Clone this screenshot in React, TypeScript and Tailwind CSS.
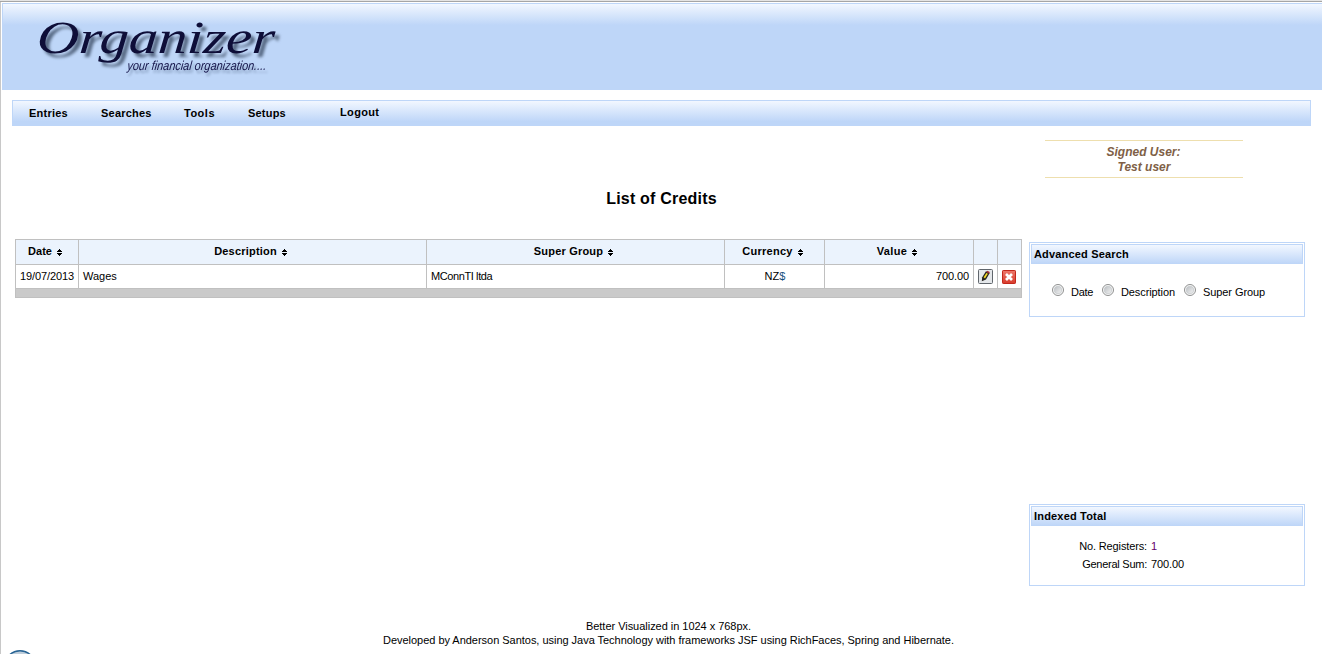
import type { ReactNode } from "react";

function SortIcon() {
  return (
    <svg className="mt-[3px] ml-[5px] shrink-0" width="5" height="7" viewBox="0 0 5 7" shapeRendering="crispEdges">
      <path d="M2 0h1v1h1v1h1v1H0V2h1V1h1zM0 4h5v1H4v1H3v1H2V6H1V5H0z" fill="#000" />
    </svg>
  );
}

function HeadCell({ label, className }: { label: string; className: string }) {
  return (
    <div className={`flex h-[24px] items-center justify-center border-r border-[#c0c0c0] bg-[#ebf3fd] pr-[4px] pb-[2px] font-bold ${className}`}>
      {label && (
        <>
          <span>{label}</span>
          <SortIcon />
        </>
      )}
    </div>
  );
}

function Panel({ title, className, children }: { title: string; className: string; children: ReactNode }) {
  return (
    <section className={`w-[276px] border border-[#bed6f8] p-px ${className}`}>
      <h2 className="h-[20px] border border-[#bed6f8] bg-linear-to-b from-[#f2f7ff] to-[#c0d7f8] pl-[2px] leading-[19px] font-bold tracking-[0.18px]">
        {title}
      </h2>
      {children}
    </section>
  );
}

function Radio() {
  return (
    <svg className="shrink-0" width="12" height="12" viewBox="0 0 12 12">
      <defs>
        <linearGradient id="radio" x1="0" y1="0" x2="1" y2="1">
          <stop offset="0" stopColor="#b9bdc1" />
          <stop offset="1" stopColor="#f4f4f4" />
        </linearGradient>
      </defs>
      <circle cx="6" cy="6" r="5.5" fill="#fafafa" stroke="#8e8f8f" />
      <circle cx="6" cy="6" r="3.8" fill="url(#radio)" stroke="#c2c5c8" strokeWidth="0.7" />
    </svg>
  );
}

function EditIcon() {
  return (
    <svg width="15" height="15" viewBox="0 0 15 15">
      <rect x="0.5" y="0.5" width="14" height="14" rx="1" fill="#e4e7ea" stroke="#60666c" />
      <path d="M3.8 12.3l.4-4L8 2.3l3.6 1.9L8 10.4z" fill="#24231f" />
      <path d="M5.6 8.3l2.8-4.4 1.5.8-2.9 4.7z" fill="#f2d824" />
      <path d="M8.3 2.9l1-1.2 2.5 1.4-.6 1.6z" fill="#a42d35" />
    </svg>
  );
}

function DeleteIcon() {
  return (
    <svg width="14" height="14" viewBox="0 0 14 14">
      <defs>
        <linearGradient id="delete" x1="0" y1="0" x2="0" y2="1">
          <stop offset="0" stopColor="#ed796c" />
          <stop offset="1" stopColor="#d83a2b" />
        </linearGradient>
      </defs>
      <rect x="0.5" y="0.5" width="13" height="13" rx="0.7" fill="url(#delete)" stroke="#c3271b" />
      <path d="M4 4l6 6M10 4l-6 6" stroke="#fff" strokeWidth="2.7" />
    </svg>
  );
}

function Brand() {
  return (
    <svg className="font-['Liberation_Serif',serif] italic" width="300" height="85" viewBox="0 0 300 85">
      <g className="drop-shadow-[4px_4px_1.5px_rgba(50,66,90,0.75)]">
        <text transform="translate(33 49) skewX(-4)" textLength="238" lengthAdjust="spacingAndGlyphs" fontSize="46" fill="#0e0e38">
          Organizer
        </text>
      </g>
      <g className="font-['Liberation_Sans',sans-serif] drop-shadow-[2px_3px_1px_rgba(60,80,110,0.45)]">
        <text transform="translate(124 66) skewX(-6)" textLength="139" lengthAdjust="spacingAndGlyphs" fontSize="13" fill="#15154a">
          your financial organization....
        </text>
      </g>
    </svg>
  );
}

export default function App() {
  return (
    <div className="flex h-[654px] w-[1322px] flex-col overflow-hidden border-t border-[#e4e4e4] bg-white font-['Liberation_Sans',Arial,sans-serif] text-[11px] text-black">
      <div className="h-px shrink-0 bg-[#a5a5a5]" />
      <div className="flex h-[652px] flex-col border-l border-[#c8c8c8] pt-px">
        <header className="ml-px h-[87px] shrink-0 border border-r-0 border-[#bed6f8] bg-[#bed6f8] bg-[linear-gradient(to_bottom,#f2f7ff_0px,#bed6f8_21px)]">
          <Brand />
        </header>

        <nav className="mt-[10px] ml-[11px] flex h-[26px] w-[1299px] shrink-0 border border-[#bed6f8] bg-linear-to-b from-[#f2f7ff] to-[#bed6f8] to-85% pl-[16px] leading-[25px] font-bold">
          <a className="w-[72px] tracking-[0.22px]">Entries</a>
          <a className="w-[83px] tracking-[0.22px]">Searches</a>
          <a className="w-[64px] tracking-[0.5px]">Tools</a>
          <a className="w-[92px] tracking-[0.2px]">Setups</a>
          <a className="leading-[23px] tracking-[0.35px]">Logout</a>
        </nav>

        <div className="mt-[14px] ml-[1044px] h-[38px] w-[198px] shrink-0 border-y border-[#eedfae] pt-[4px] text-center text-[12px] leading-[15px] font-bold text-[#805f46] italic">
          <div className="pr-px">Signed User:</div>
          <div>Test user</div>
        </div>

        <h1 className="mt-[11px] h-[20px] w-[1321px] shrink-0 text-center text-[16px] leading-[20px] font-bold tracking-[0.2px]">List of Credits</h1>

        <main className="mt-[30px] ml-[14px] flex h-[347px] shrink-0 gap-[7px]">
          <div className="w-[1007px]">
            <div className="border border-r-0 border-[#c0c0c0]">
              <div className="flex border-b border-[#c0c0c0]">
                <HeadCell label="Date" className="w-[63px]" />
                <HeadCell label="Description" className="w-[348px] tracking-[0.2px]" />
                <HeadCell label="Super Group" className="w-[298px] tracking-[0.2px]" />
                <HeadCell label="Currency" className="w-[100px] tracking-[0.25px]" />
                <HeadCell label="Value" className="w-[149px] tracking-[0.4px]" />
                <HeadCell label="" className="w-[24px]" />
                <HeadCell label="" className="w-[24px]" />
              </div>
              <div className="flex h-[23px] leading-[23px] [&>div]:border-r [&>div]:border-[#c0c0c0]">
                <div className="w-[63px] pl-[4px] tracking-[-0.1px] whitespace-nowrap">19/07/2013</div>
                <div className="w-[348px] pl-[4px]">Wages</div>
                <div className="w-[298px] pl-[4px] tracking-[-0.4px]">MConnTI ltda</div>
                <div className="w-[100px] pl-px text-center">
                  NZ<span className="text-[#17507d]">$</span>
                </div>
                <div className="w-[149px] pr-[4px] text-right tracking-[-0.1px]">700.00</div>
                <div className="flex w-[24px] items-center justify-center"><EditIcon /></div>
                <div className="flex w-[24px] items-center justify-center pr-px"><DeleteIcon /></div>
              </div>
            </div>
            <div className="h-[9px] border border-t-0 border-[#c0c0c0] bg-[#cacaca]" />
          </div>

          <aside className="mt-[3px] flex flex-col justify-between">
            <Panel title="Advanced Search" className="h-[75px]">
              <div className="flex pt-[20px] pl-[21px] leading-[16px]">
                <Radio />
                <span className="mr-[9px] ml-[7px] w-[22px] tracking-[-0.25px]">Date</span>
                <Radio />
                <span className="mr-[9px] ml-[7px] w-[54px] tracking-[-0.1px] whitespace-nowrap">Description</span>
                <Radio />
                <span className="ml-[7px] tracking-[-0.08px] whitespace-nowrap">Super Group</span>
              </div>
            </Panel>
            <Panel title="Indexed Total" className="h-[82px]">
              <div className="flex flex-col pt-[11px] leading-[18px]">
                <div className="flex gap-[4px]">
                  <span className="w-[116px] text-right tracking-[-0.13px]">No. Registers:</span>
                  <span className="text-[#64006a]">1</span>
                </div>
                <div className="flex gap-[4px]">
                  <span className="w-[116px] text-right tracking-[-0.25px]">General Sum:</span>
                  <span className="tracking-[-0.1px]">700.00</span>
                </div>
              </div>
            </Panel>
          </aside>
        </main>

        <footer className="mt-[33px] ml-[13px] w-[1309px] shrink-0 text-center leading-[14px]">
          <div className="tracking-[-0.03px]">Better Visualized in 1024 x 768px.</div>
          <div className="tracking-[-0.027px]">Developed by Anderson Santos, using Java Technology with frameworks JSF using RichFaces, Spring and Hibernate.</div>
        </footer>
        <svg className="mt-[3px] ml-[3px] shrink-0" width="32" height="32" viewBox="0 0 32 32">
          <circle cx="16" cy="16" r="15.3" fill="#bfcedb" stroke="#286494" strokeWidth="1.4" />
        </svg>
      </div>
    </div>
  );
}
